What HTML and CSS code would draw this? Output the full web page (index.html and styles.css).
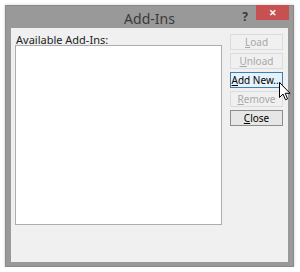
FILE: index.html
```html
<!DOCTYPE html>
<html lang="en">
<head>
    <meta charset="UTF-8">
    <title>Add-Ins</title>
    <link rel="stylesheet" href="styles.css">
</head>
<body>

    <div class="window">
        <div class="titlebar">
            <span class="title">Add-Ins</span>
            <span class="help">?</span>
            <span class="close-x">&#x2715;</span>
        </div>

        <div class="dialog-body">
            <div class="list-column">
                <div class="list-label">A<u>v</u>ailable Add-Ins:</div>
                <div class="list-box"></div>
            </div>

            <div class="button-column">
                <button class="btn disabled"><u>L</u>oad</button>
                <button class="btn disabled"><u>U</u>nload</button>
                <button class="btn hover"><u>A</u>dd New...</button>
                <button class="btn disabled"><u>R</u>emove</button>
                <button class="btn default"><u>C</u>lose</button>
                <svg class="cursor" width="12" height="19" viewBox="0 0 12 19">
                    <path d="M0.5 0.5 L0.5 15.5 L4 12 L6.5 17.8 L8.6 16.9 L6.2 11.3 L11 11.3 Z" fill="#fff" stroke="#000" stroke-width="1" stroke-linejoin="miter"/>
                </svg>
            </div>
        </div>
    </div>

</body>
</html>
```

FILE: styles.css
```css
* {
    margin: 0;
    padding: 0;
    box-sizing: border-box;
}

body {
    background-color: #fff;
    font-family: "Noto Sans", Arial, sans-serif;
    font-size: 11px;
    color: #000;
}

.window {
    margin: 5px 0 0 5px;
    width: 289px;
    height: 262px;
    background-color: #999;
    border: 1px solid #8a8a8a;
    padding: 0 5px 4px 5px;
    display: flex;
    flex-direction: column;
    box-shadow: 0 0 3px rgba(0, 0, 0, 0.2);
}

/* Title bar */
.titlebar {
    height: 22px;
    position: relative;
    display: flex;
    align-items: flex-start;
    justify-content: flex-end;
}

.title {
    position: absolute;
    left: 0;
    right: 0;
    top: 3px;
    text-align: center;
    font-size: 14px;
    color: #3a3a3a;
}

.help {
    font-size: 12px;
    font-weight: bold;
    color: #3a3a3a;
    margin: 2px 8px 0 0;
}

.close-x {
    width: 33px;
    height: 15px;
    margin-top: -1px;
    margin-right: -1px;
    background-color: #c75050;
    color: #fff;
    font-size: 9px;
    font-weight: bold;
    display: flex;
    align-items: center;
    justify-content: center;
}

/* Dialog content */
.dialog-body {
    flex: 1;
    background-color: #f0f0f0;
    display: flex;
    gap: 8px;
    padding: 6px 5px 0 4px;
}

.list-column {
    width: 207px;
    display: flex;
    flex-direction: column;
}

.list-label {
    height: 11px;
    line-height: 11px;
    padding-left: 1px;
    color: #222;
}

.list-box {
    height: 180px;
    background-color: #fff;
    border: 1px solid #abadb3;
}

.button-column {
    width: 53px;
    display: flex;
    flex-direction: column;
    gap: 3px;
    position: relative;
}

.btn {
    height: 16px;
    padding: 0;
    white-space: nowrap;
    font-family: inherit;
    font-size: 10px;
    line-height: 14px;
    background-color: #f0f0f0;
    border: 1px solid #adadad;
    color: #000;
}

.btn.disabled {
    border-color: #dcdcdc;
    color: #a8a8a8;
}

.btn.hover {
    background-color: #e5f1fb;
    border-color: #3c7fb1;
}

.btn.default {
    background-color: #e6e6e6;
    border-color: #8c8c8c;
}

.cursor {
    position: absolute;
    left: 49px;
    top: 48px;
}
```
